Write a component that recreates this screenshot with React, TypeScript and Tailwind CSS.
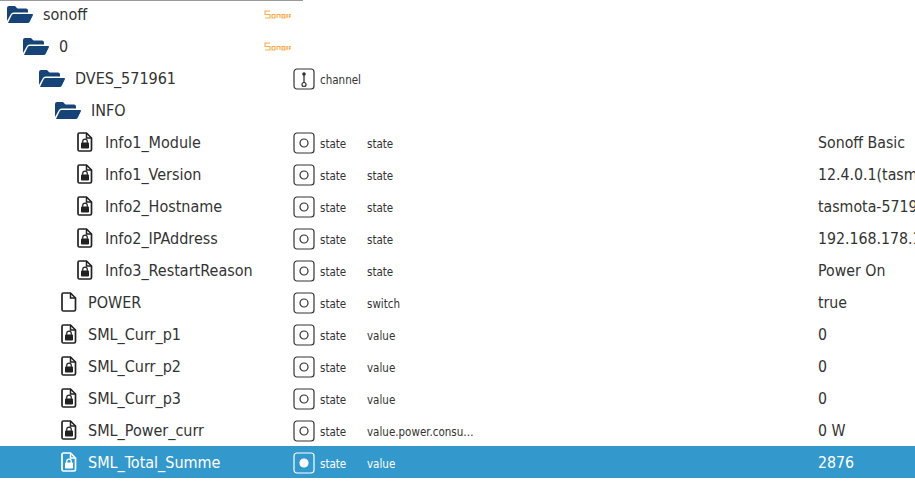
const FONT = "font-['DejaVu_Sans_Condensed','DejaVu_Sans','Liberation_Sans',sans-serif]";

function FolderOpen({ className = "" }: { className?: string }) {
  return (
    <svg viewBox="0 0 26 17" className={`h-[17px] w-[26px] ${className}`}>
      <path
        fill="#164477"
        d="M0 15V2a2 2 0 0 1 2-2h6l2.500 2.500H19a2 2 0 0 1 2 2V6.500H6.500a3 3 0 0 0-2.700 1.700z M1 17l3.800-8a2 2 0 0 1 1.800-1.100H25c.8 0 1.200.7.900 1.400l-3.200 6.500a2 2 0 0 1-1.800 1.200z"
      />
    </svg>
  );
}

function FileIcon({ locked, color }: { locked: boolean; color: string }) {
  return (
    <svg viewBox="0 0 16 20" className="h-5 w-4" fill="none">
      <path
        d="M2.500 1h7l5 5v11.500a1.500 1.500 0 0 1-1.500 1.500H2.500A1.500 1.500 0 0 1 1 17.500v-15A1.500 1.500 0 0 1 2.500 1z"
        stroke={color}
        strokeWidth="1.700"
      />
      <path d="M9.500 1v5h5" stroke={color} strokeWidth="1.500" />
      {locked && (
        <>
          <rect x="4" y="10.500" width="8" height="6" rx="0.800" fill={color} />
          <path d="M5.700 11V9.500a2.300 2.300 0 0 1 4.600 0V11" stroke={color} strokeWidth="1.200" />
        </>
      )}
    </svg>
  );
}

function TypeIcon({ kind, selected }: { kind: "state" | "channel"; selected?: boolean }) {
  const color = selected ? "#ffffff" : "#333333";
  return (
    <svg viewBox="0 0 22 22" className="mt-[2px] h-[22px] w-[22px] shrink-0" fill="none">
      <rect x="1" y="1" width="20" height="20" rx="3" stroke={color} strokeWidth="1.200" />
      {kind === "state" ? (
        <circle cx="11" cy="11" r="4" stroke={color} strokeWidth="1.200" fill={selected ? color : "none"} />
      ) : (
        <>
          <circle cx="11" cy="6" r="1.800" fill={color} />
          <path d="M11 6v9" stroke={color} strokeWidth="1.300" />
          <circle cx="11" cy="16.500" r="2" stroke={color} strokeWidth="1.200" />
        </>
      )}
    </svg>
  );
}

function SonoffLogo() {
  return (
    <svg viewBox="0 0 27 9" className="h-[9px] w-[27px]" fill="none" stroke="#f9a02c" strokeWidth="1.100" opacity="0.85">
      <path d="M6 1H1v3.500h5V8H1" />
      <path d="M8 4.500h3V8H8z" />
      <path d="M13 8V4.500h3V8" />
      <path d="M18 4.500h3V8h-3z" fill="#f9a02c" fillOpacity="0.3" />
      <path d="M23 8V4.500h1.200M23 6.200h1.200" />
      <path d="M25.400 8V4.500H27M25.400 6.200H27" />
    </svg>
  );
}

type Row = {
  name: string;
  level: number;
  icon: "folder" | "lock" | "file";
  type?: "state" | "channel";
  role?: string;
  value?: string;
  logo?: boolean;
  selected?: boolean;
};

const rows: Row[] = [
  { name: "sonoff", level: 0, icon: "folder", logo: true },
  { name: "0", level: 1, icon: "folder", logo: true },
  { name: "DVES_571961", level: 2, icon: "folder", type: "channel" },
  { name: "INFO", level: 3, icon: "folder" },
  { name: "Info1_Module", level: 4, icon: "lock", type: "state", role: "state", value: "Sonoff Basic" },
  { name: "Info1_Version", level: 4, icon: "lock", type: "state", role: "state", value: "12.4.0.1(tasmota)" },
  { name: "Info2_Hostname", level: 4, icon: "lock", type: "state", role: "state", value: "tasmota-571961" },
  { name: "Info2_IPAddress", level: 4, icon: "lock", type: "state", role: "state", value: "192.168.178.123" },
  { name: "Info3_RestartReason", level: 4, icon: "lock", type: "state", role: "state", value: "Power On" },
  { name: "POWER", level: 3, icon: "file", type: "state", role: "switch", value: "true" },
  { name: "SML_Curr_p1", level: 3, icon: "lock", type: "state", role: "value", value: "0" },
  { name: "SML_Curr_p2", level: 3, icon: "lock", type: "state", role: "value", value: "0" },
  { name: "SML_Curr_p3", level: 3, icon: "lock", type: "state", role: "value", value: "0" },
  { name: "SML_Power_curr", level: 3, icon: "lock", type: "state", role: "value.power.consu…", value: "0 W" },
  { name: "SML_Total_Summe", level: 3, icon: "lock", type: "state", role: "value", value: "2876", selected: true },
];

const indent = ["pl-[7px]", "pl-[23px]", "pl-[39px]", "pl-[55px]", "pl-[77px]"];

function TreeRow({ row }: { row: Row }) {
  const fileColor = row.selected ? "#ffffff" : "#222222";
  return (
    <div className={`flex h-8 items-center ${row.selected ? "bg-[#3399cc] text-white" : "text-[#333333]"}`}>
      <div className={`flex w-[293px] shrink-0 items-center ${indent[row.level]}`}>
        {row.icon === "folder" ? (
          <>
            <FolderOpen />
            <span className="ml-[10px] mt-px text-[16px] leading-5">{row.name}</span>
          </>
        ) : (
          <>
            <span className={row.level === 3 ? "ml-[6px]" : ""}>
              <FileIcon locked={row.icon === "lock"} color={fileColor} />
            </span>
            <span className={`mt-px text-[16px] leading-5 ${row.level === 3 ? "ml-[11px]" : "ml-3"}`}>{row.name}</span>
          </>
        )}
      </div>
      <div className="flex w-[74px] shrink-0 items-center gap-[5px]">
        {row.type && <TypeIcon kind={row.type} selected={row.selected} />}
        {row.type && <span className="mt-[3px] text-[11.500px] leading-4">{row.type}</span>}
      </div>
      <div className="mt-[3px] w-[451px] shrink-0 text-[11.500px] leading-4">{row.role}</div>
      <div className="mt-px whitespace-nowrap text-[15.750px] leading-5">{row.value}</div>
    </div>
  );
}

function LogoRow({ row }: { row: Row }) {
  return (
    <div className="flex h-8 items-center text-[#333333]">
      <div className={`flex w-[264px] shrink-0 items-center ${indent[row.level]}`}>
        <FolderOpen />
        <span className="ml-[10px] mt-px text-[16px] leading-5">{row.name}</span>
      </div>
      <SonoffLogo />
    </div>
  );
}

export default function App() {
  return (
    <div className={`relative h-[481px] w-[915px] overflow-hidden bg-white ${FONT}`}>
      <div className="absolute left-0 top-0 z-10 h-px w-[303px] bg-[#999999]" />
      <div className="-mt-[2px]">
        {rows.map((r) =>
          r.logo ? <LogoRow key={r.name} row={r} /> : <TreeRow key={r.name} row={r} />
        )}
      </div>
    </div>
  );
}
